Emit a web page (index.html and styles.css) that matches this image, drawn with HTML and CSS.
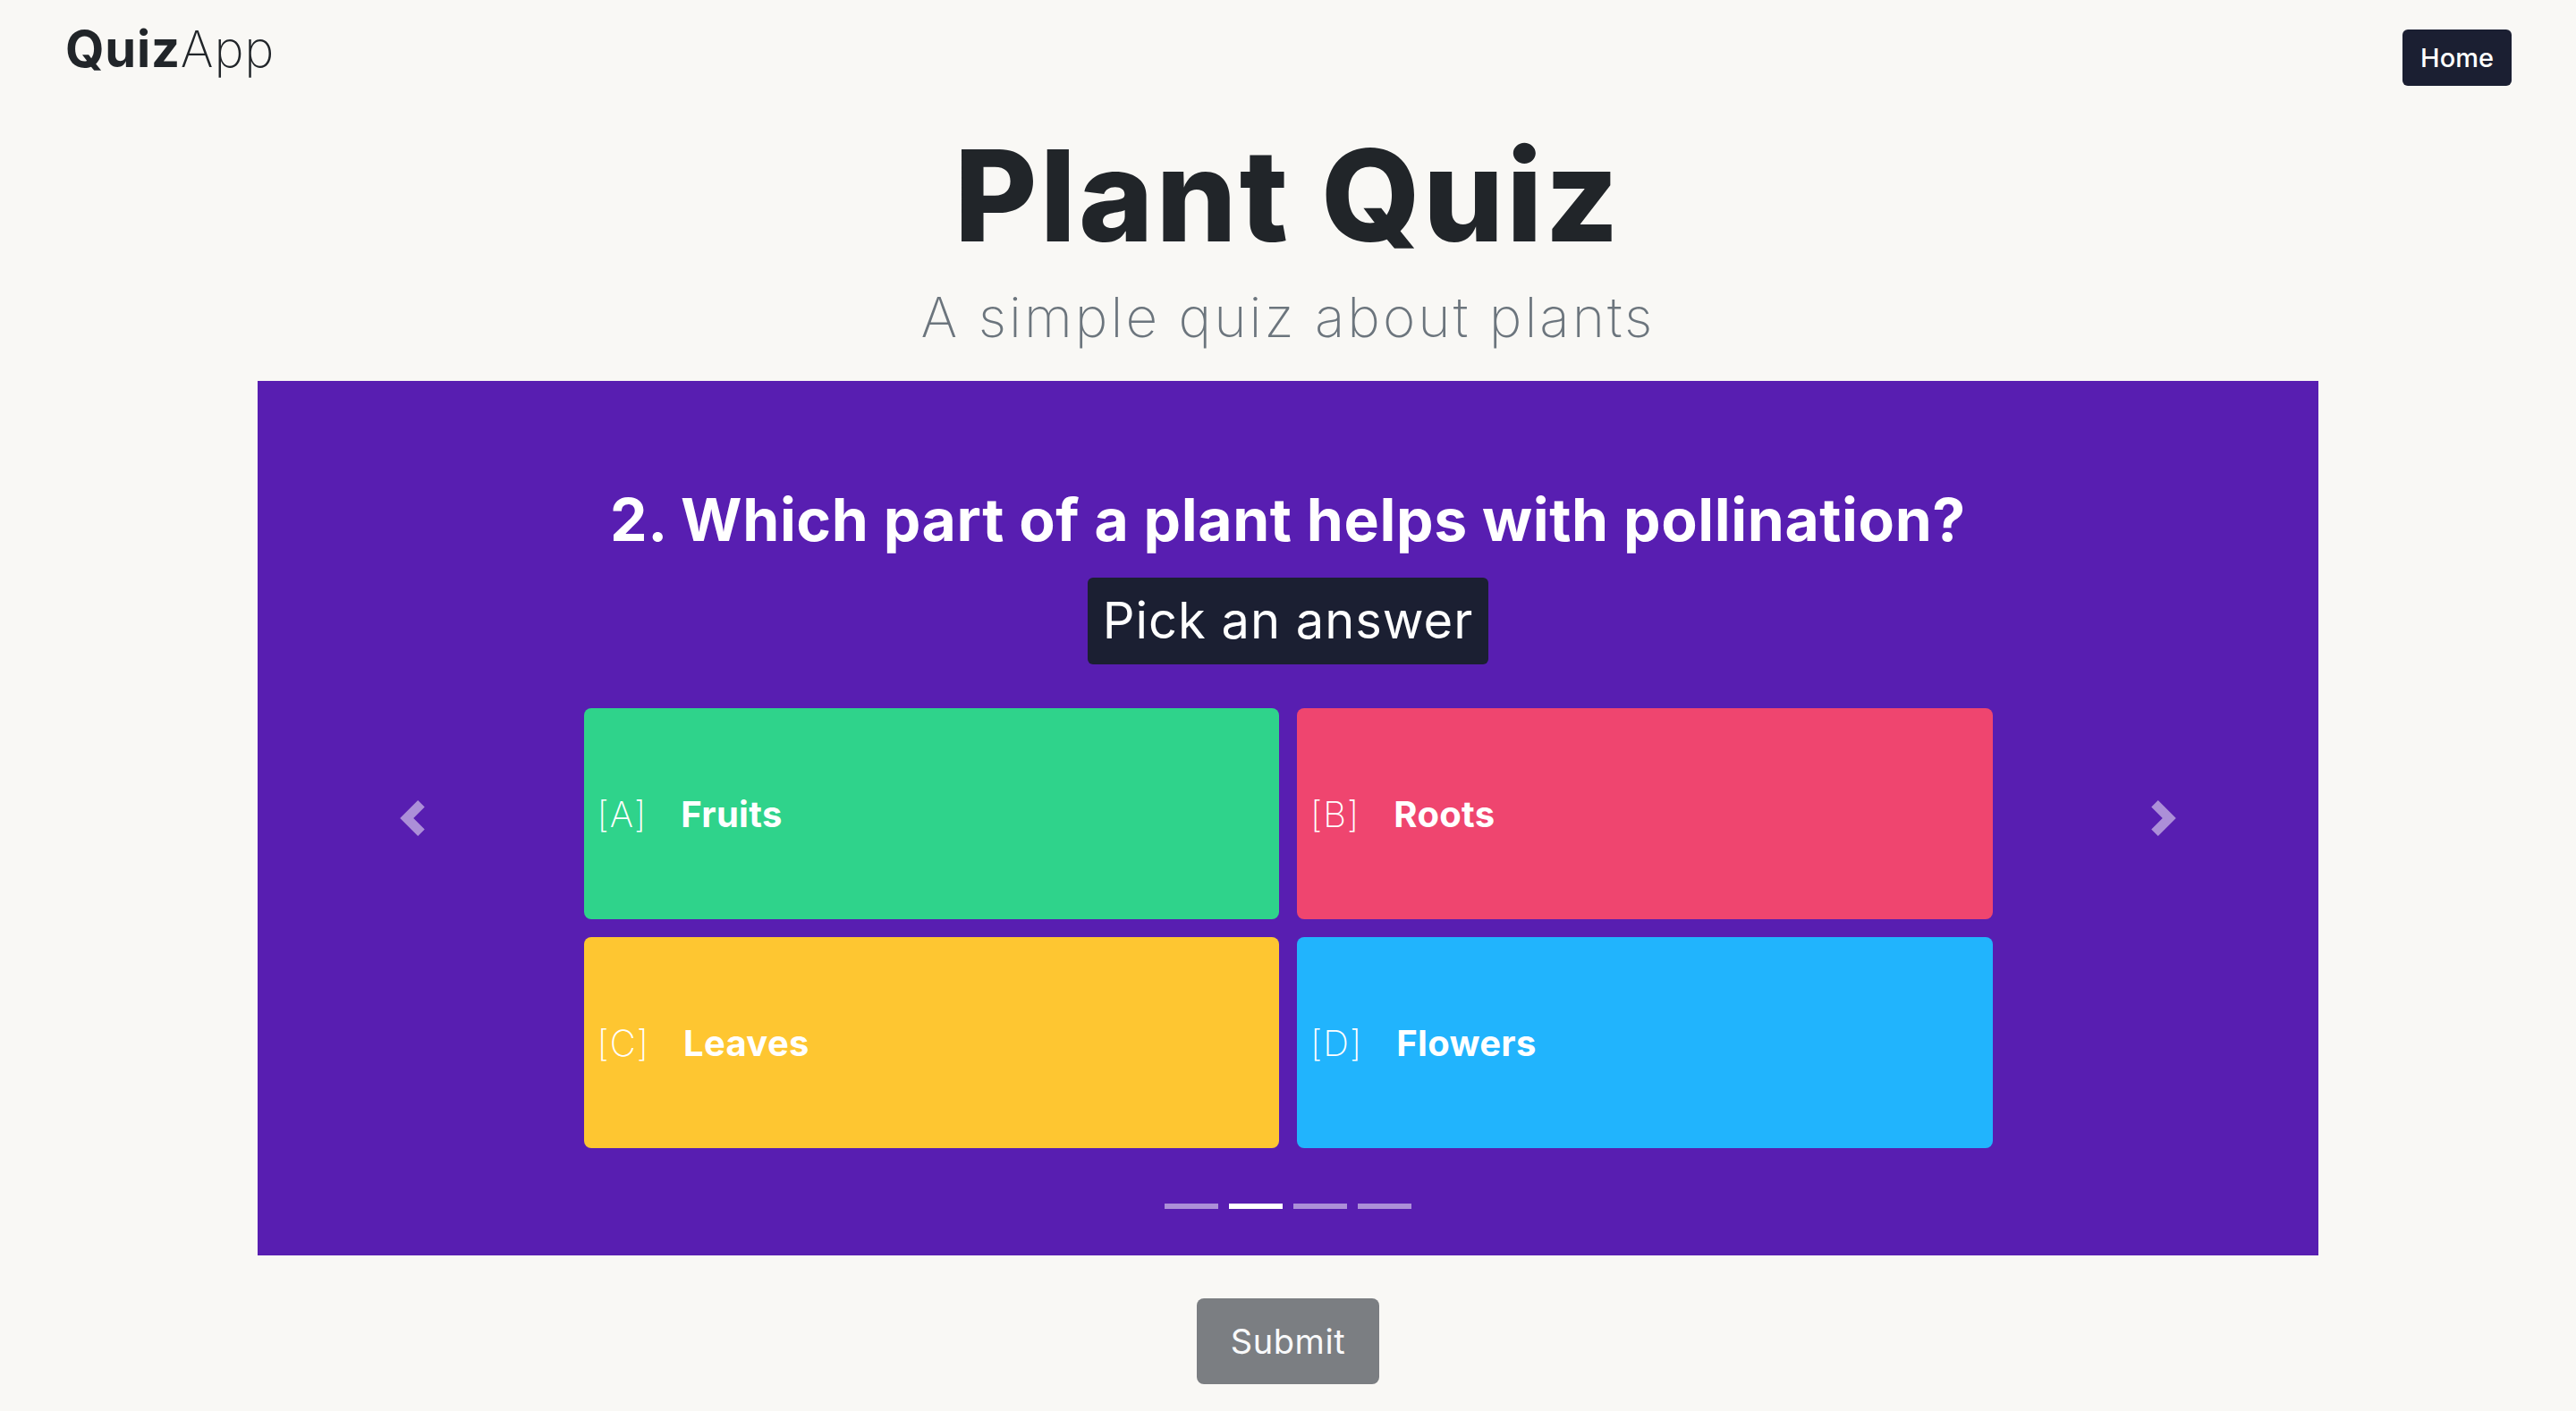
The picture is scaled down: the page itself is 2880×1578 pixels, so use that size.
FILE: index.html
```html
<!DOCTYPE html>
<html lang="en">
<head>
<meta charset="utf-8">
<title>QuizApp - Plant Quiz</title>
<link rel="stylesheet" href="styles.css">
</head>
<body>
<nav class="navbar">
  <a class="brand" href="#"><span class="brand-bold">Quiz</span><span class="brand-thin">App</span></a>
  <a class="home-btn" href="#">Home</a>
</nav>
<header class="hero">
  <h1 class="title">Plant Quiz</h1>
  <p class="subtitle">A simple quiz about plants</p>
</header>
<main class="quiz">
  <section class="carousel">
    <button class="control control-prev" aria-label="Previous">
      <svg class="chevron" viewBox="0 0 8 8" width="40" height="40"><path d="M5.25 0l-4 4 4 4 1.5-1.5L4.25 4l2.5-2.5L5.25 0z"/></svg>
    </button>
    <div class="slide">
      <h2 class="question">2. Which part of a plant helps with pollination?</h2>
      <div class="pick">Pick an answer</div>
      <div class="answers">
        <button class="answer answer-green"><span class="letter">[A]</span><span class="label">Fruits</span></button>
        <button class="answer answer-red"><span class="letter">[B]</span><span class="label">Roots</span></button>
        <button class="answer answer-yellow"><span class="letter">[C]</span><span class="label">Leaves</span></button>
        <button class="answer answer-blue"><span class="letter">[D]</span><span class="label">Flowers</span></button>
      </div>
      <ol class="indicators">
        <li class="dot"></li>
        <li class="dot active"></li>
        <li class="dot"></li>
        <li class="dot"></li>
      </ol>
    </div>
    <button class="control control-next" aria-label="Next">
      <svg class="chevron" viewBox="0 0 8 8" width="40" height="40"><path d="M2.75 0l-1.5 1.5L3.75 4l-2.5 2.5L2.75 8l4-4-4-4z"/></svg>
    </button>
  </section>
  <div class="submit-row">
    <button class="submit">Submit</button>
  </div>
</main>
</body>
</html>
```

FILE: styles.css
```css
* { box-sizing: border-box; }

body {
  margin: 0;
  background: #f9f8f5;
  color: #212529;
  font-family: Inter, "Open Sans", sans-serif;
}

.navbar {
  display: flex;
  justify-content: space-between;
  align-items: flex-start;
  padding: 22px 72px 0 73px;
}

.brand {
  font-size: 56px;
  line-height: 67px;
  color: #212529;
  text-decoration: none;
  letter-spacing: 0.8px;
}
.brand-bold { font-weight: 700; }
.brand-thin { font-weight: 200; }

.home-btn {
  margin-top: 11px;
  display: block;
  height: 63px;
  line-height: 63px;
  padding: 0 20px;
  background: #1b1f32;
  color: #ffffff;
  font-size: 29px;
  font-weight: 500;
  border-radius: 6px;
  text-decoration: none;
}

.hero {
  text-align: center;
  margin-top: 37px;
}

.title {
  margin: 0;
  font-size: 142px;
  line-height: 170px;
  font-weight: 800;
  letter-spacing: 3px;
}

.subtitle {
  margin: 16px 0 0;
  font-size: 62px;
  line-height: 72px;
  font-weight: 200;
  color: #6c757d;
  letter-spacing: 3px;
}

.quiz {
  margin-top: 35px;
}

.carousel {
  width: 80%;
  margin: 0 auto;
  background: #581eb1;
  display: grid;
  grid-template-columns: 15% 1fr 15%;
}

.control {
  display: flex;
  align-items: center;
  justify-content: center;
  border: 0;
  padding: 0;
  background: transparent;
  opacity: 0.5;
  cursor: pointer;
}
.chevron { fill: #ffffff; display: block; }

.slide {
  display: flex;
  flex-direction: column;
  align-items: center;
  padding: 116px 0 52px;
}

.question {
  margin: 0;
  font-size: 66px;
  line-height: 79px;
  font-weight: 700;
  color: #ffffff;
  letter-spacing: 0.6px;
}

.pick {
  margin-top: 25px;
  height: 97px;
  line-height: 97px;
  padding: 0 17px;
  background: #1b1f32;
  color: #ffffff;
  font-size: 56px;
  font-weight: 400;
  letter-spacing: 1px;
  border-radius: 6px;
}

.answers {
  margin-top: 49px;
  width: 1575px;
  display: grid;
  grid-template-columns: 1fr 1fr;
  gap: 20px;
}

.answer {
  height: 236px;
  display: flex;
  align-items: center;
  gap: 38px;
  padding: 0 15px;
  border: 0;
  border-radius: 8px;
  color: #ffffff;
  font-family: inherit;
  font-size: 40px;
  text-align: left;
  cursor: pointer;
}
.answer-green { background: #2fd38b; }
.answer-red { background: #ef456f; }
.answer-yellow { background: #fec631; }
.answer-blue { background: #21b4fd; }

.letter { font-weight: 200; letter-spacing: 1px; }
.label { font-weight: 700; letter-spacing: 0.3px; }

.indicators {
  list-style: none;
  margin: 62px 0 0;
  padding: 0;
  display: flex;
  gap: 12px;
}
.dot {
  width: 60px;
  height: 6px;
  background: #ffffff;
  opacity: 0.5;
}
.dot.active { opacity: 1; }

.submit-row {
  display: flex;
  justify-content: center;
  margin-top: 48px;
}

.submit {
  height: 96px;
  padding: 0 38px;
  border: 0;
  border-radius: 8px;
  background: #7b7e82;
  color: #f8f9fa;
  font-family: inherit;
  font-size: 38px;
  font-weight: 400;
  letter-spacing: 0.6px;
}
```
